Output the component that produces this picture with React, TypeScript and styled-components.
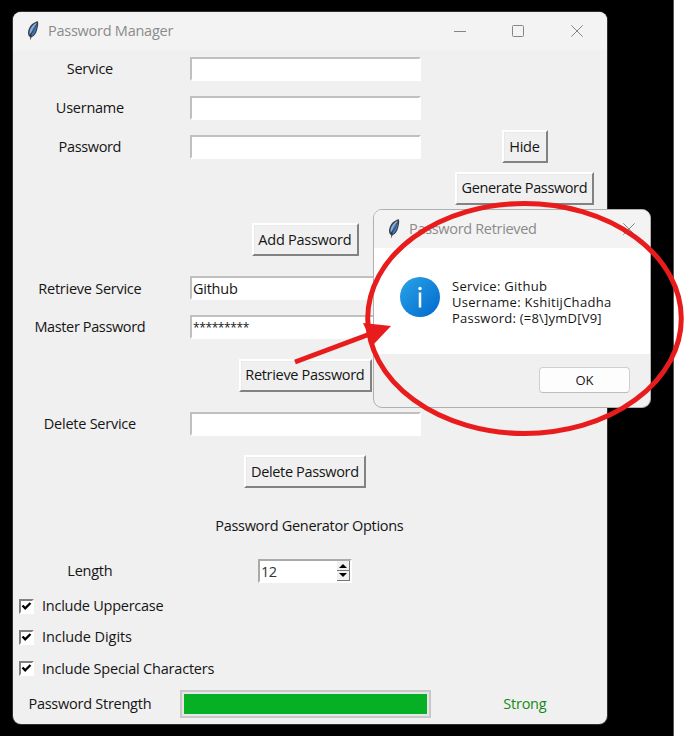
import React from "react";
import styled, { createGlobalStyle } from "styled-components";

const Global = createGlobalStyle`
  * { box-sizing: border-box; }
  body { margin: 0; background: #fff; }
`;

const Desktop = styled.div`
  position: relative;
  width: 684px;
  height: 736px;
  overflow: hidden;
  padding: 12px 0 0 13px;
  background: linear-gradient(90deg, #000 673px, #555 673px, #555 674px, #fff 674px);
  font-family: "Open Sans", "Noto Sans", sans-serif;
  font-size: 14.5px;
  line-height: 20px;
  color: #151515;
`;

const Window = styled.main`
  width: 594px;
  height: 712px;
  border-radius: 8px;
  overflow: hidden;
  background: #f0f0f0;
  box-shadow: 0 0 0 1px #303030;
`;

const TitleBar = styled.header`
  display: flex;
  align-items: center;
  height: 38px;
  padding-left: 11px;
  background: #f3f3f3;
  color: #8b8b8b;
`;

const Title = styled.div`
  flex: 1;
  padding-left: 7px;
`;

const Caption = styled.div<{ $w: number }>`
  display: flex;
  justify-content: center;
  width: ${(p) => p.$w}px;
`;

const Form = styled.div`
  display: grid;
  margin-top: -1px;
  grid-template-columns: 154px 276px 163px;
  grid-template-rows: 39px 39px 39px 44px 59px 38px 39px 58px 39px 57px 51px 39px 31px 31px 32px 39px;
`;

const Cell = styled.div<{ $row: number; $col: number; $left?: boolean; $indent?: number; $drop?: number }>`
  grid-row: ${(p) => p.$row};
  grid-column: ${(p) => (p.$left ? "1 / 3" : p.$col)};
  display: flex;
  align-items: center;
  justify-content: ${(p) => (p.$left ? "flex-start" : "center")};
  padding-left: ${(p) => p.$indent ?? 0}px;
  padding-top: ${(p) => p.$drop ?? 0}px;
`;

const Fitted = styled.span<{ $s?: number }>`
  display: inline-block;
  white-space: pre;
  letter-spacing: ${(p) => p.$s ?? -0.25}px;
  margin-right: ${(p) => -(p.$s ?? -0.25)}px;
`;

const Entry = styled.div<{ $masked?: boolean }>`
  width: 231px;
  height: 24px;
  padding: 0 1px;
  font-size: ${(p) => (p.$masked ? 12 : 14.5)}px;
  line-height: 21px;
  border: 2px solid #fff;
  border-top-color: #c0c0c0;
  border-left-color: #c0c0c0;
  background: #fff;
`;

const Button = styled.button<{ $w: number }>`
  display: flex;
  align-items: center;
  justify-content: center;
  width: ${(p) => p.$w}px;
  height: 33px;
  padding: 0;
  font: inherit;
  color: inherit;
  background: #f0f0f0;
  border: 2px solid;
  border-color: #fff #828282 #828282 #fff;
  box-shadow: inset 1px 1px #e9e9e9;
`;

const Spin = styled.div`
  display: flex;
  width: 94px;
  height: 24px;
  padding-left: 1px;
  line-height: 21px;
  border: 2px solid #fff;
  border-top-color: #aaa;
  border-left-color: #aaa;
  background: #fff;
`;

const SpinValue = styled.span`
  flex: 1;
  color: #333;
  letter-spacing: -0.5px;
`;

const Steps = styled.div`
  display: grid;
  grid-template-rows: 10px 10px;
  width: 13px;
`;

const Step = styled.div`
  display: flex;
  align-items: center;
  justify-content: center;
  background: #f0f0f0;
  border-right: 1px solid #777;
  border-bottom: 1px solid #777;
`;

const Box = styled.span`
  display: flex;
  width: 15px;
  height: 15px;
  margin-right: 8px;
  border: 2px solid #fff;
  border-top-color: #808080;
  border-left-color: #808080;
  background: #fff;
`;

const Track = styled.div`
  width: 251px;
  height: 28px;
  padding: 2px;
  border: 2px solid #c8c8c8;
  background: #e6e6e6;
`;

const Fill = styled.div`
  height: 100%;
  background: #06b025;
`;

const Strong = styled.span`
  color: #148a14;
`;

const Dialog = styled.section`
  position: absolute;
  left: 373px;
  top: 209px;
  width: 278px;
  height: 199px;
  overflow: hidden;
  border: 1px solid #b0b0b0;
  border-radius: 9px;
  background: #f0f0f0;
`;

const Message = styled.div`
  display: flex;
  height: 106px;
  padding: 29px 0 0 26px;
  background: #fff;
`;

const Lines = styled.div`
  padding: 1px 0 0 12px;
  font-size: 13px;
  line-height: 16px;
`;

const Footer = styled.footer`
  display: flex;
  justify-content: flex-end;
  padding: 13px 20px 0 0;
`;

const OkButton = styled.button`
  width: 91px;
  height: 26px;
  padding: 0;
  border: 1px solid #cfcfcf;
  border-bottom-color: #bcbcbc;
  border-radius: 4px;
  background: #fdfdfd;
  color: inherit;
  font: inherit;
  font-size: 13px;
`;

const Annotation = styled.svg`
  position: absolute;
  inset: 0;
  pointer-events: none;
`;

const Feather = () => (
  <svg width="17" height="20" viewBox="0 0 17 20">
    <path d="M14 .3C10 1 6.500 3.800 4.800 8c-1 2.500-1.100 5 0 7l1.400 1.200.1 3.300 1.200-3.200C10.800 15 12.300 12 13.100 9c.8-3 1.500-5.800.9-8.700Z" fill="#3a3c42" />
    <path d="M12.800 1.700C9.500 3 6.400 6.500 5.600 10l-.1 3.600C8.500 11 11 7 12.800 1.700Z" fill="#7fb0e6" />
    <path d="M13 2.800c0 4.500-1.500 9.400-4.400 12L6.700 14.200C9.500 10.500 11.700 7 13 2.800Z" fill="#3f78bd" />
    <path d="M12 4C9.500 7 7.500 11 6.500 16" fill="none" stroke="#1d3c66" strokeWidth=".7" />
  </svg>
);

const Close = () => (
  <svg width="14" height="14" viewBox="0 0 14 14" stroke="#858585" fill="none">
    <path d="m1.300 1.300 11.400 11.400M12.700 1.300 1.300 12.700" />
  </svg>
);

const Check = ({ text, row, s }: { text: string; row: number; s?: number }) => (
  <Cell $row={row} $col={1} $left $indent={6} $drop={1}>
    <Box>
      <svg width="11" height="11" viewBox="0 0 11 11">
        <path d="M1.500 4.500 4.200 7.300 9.500 2" stroke="#000" strokeWidth="2.300" fill="none" />
      </svg>
    </Box>
    <Fitted $s={s}>{text}</Fitted>
  </Cell>
);

const labels: { row: number; text: string; s?: number }[] = [
  { row: 1, text: "Service" },
  { row: 2, text: "Username" },
  { row: 3, text: "Password", s: -0.35 },
  { row: 6, text: "Retrieve Service" },
  { row: 7, text: "Master Password", s: -0.37 },
  { row: 9, text: "Delete Service" },
  { row: 12, text: "Length" },
  { row: 16, text: "Password Strength" },
];

const entries: { row: number; text?: string; s?: number; masked?: boolean }[] = [
  { row: 1 },
  { row: 2 },
  { row: 3 },
  { row: 6, text: "Github" },
  { row: 7, text: "*********", s: -0.4, masked: true },
  { row: 9 },
];

const buttons: { row: number; col: number; text: string; w: number; s?: number }[] = [
  { row: 3, col: 3, text: "Hide", w: 46 },
  { row: 4, col: 3, text: "Generate Password", w: 139, s: -0.38 },
  { row: 5, col: 2, text: "Add Password", w: 107 },
  { row: 8, col: 2, text: "Retrieve Password", w: 133, s: -0.32 },
  { row: 10, col: 2, text: "Delete Password", w: 122, s: -0.35 },
];

export default function App() {
  return (
    <Desktop>
      <Global />
      <Window>
        <TitleBar>
          <Feather />
          <Title><Fitted>Password Manager</Fitted></Title>
          <Caption $w={58}><svg width="13" height="13" stroke="#858585"><path d="M0 6.500h12" /></svg></Caption>
          <Caption $w={58}><svg width="13" height="13" stroke="#858585" fill="none"><rect x=".5" y=".5" width="11" height="11" rx="1" /></svg></Caption>
          <Caption $w={60}><Close /></Caption>
        </TitleBar>
        <Form>
          {labels.map((l) => (
            <Cell key={l.text} $row={l.row} $col={1} $drop={1}><Fitted $s={l.s}>{l.text}</Fitted></Cell>
          ))}
          <Cell $row={11} $col={2} $indent={9} $drop={1}><Fitted $s={-0.3}>Password Generator Options</Fitted></Cell>
          {entries.map((e) => (
            <Cell key={e.row} $row={e.row} $col={2} $indent={1}>
              <Entry $masked={e.masked}>{e.text && <Fitted $s={e.s}>{e.text}</Fitted>}</Entry>
            </Cell>
          ))}
          {buttons.map((b) => (
            <Cell key={b.text} $row={b.row} $col={b.col}>
              <Button $w={b.w}><Fitted $s={b.s}>{b.text}</Fitted></Button>
            </Cell>
          ))}
          <Cell $row={12} $col={2}>
            <Spin>
              <SpinValue>12</SpinValue>
              <Steps>
                <Step><svg width="8" height="5"><path d="M0 5 4 1l4 4Z" /></svg></Step>
                <Step><svg width="8" height="5"><path d="M0 0h8L4 4Z" /></svg></Step>
              </Steps>
            </Spin>
          </Cell>
          <Check row={13} text="Include Uppercase" />
          <Check row={14} text="Include Digits" s={-0.08} />
          <Check row={15} text="Include Special Characters" s={-0.2} />
          <Cell $row={16} $col={2} $indent={1}><Track><Fill /></Track></Cell>
          <Cell $row={16} $col={3} $indent={1} $drop={1}><Strong><Fitted>Strong</Fitted></Strong></Cell>
        </Form>
      </Window>
      <Dialog>
        <TitleBar>
          <Feather />
          <Title><Fitted $s={-0.32}>Password Retrieved</Fitted></Title>
          <Caption $w={42}><Close /></Caption>
        </TitleBar>
        <Message>
          <svg width="40" height="40" viewBox="0 0 40 40">
            <defs>
              <linearGradient id="info" x1="0" y1="0" x2="1" y2="1">
                <stop offset="0" stopColor="#2aa5e8" />
                <stop offset="1" stopColor="#0068cd" />
              </linearGradient>
            </defs>
            <circle cx="20" cy="20" r="20" fill="url(#info)" />
            <circle cx="20" cy="11.500" r="1.700" fill="#fff" />
            <path d="M20 15.500v15" stroke="#fff" strokeWidth="2.500" />
          </svg>
          <Lines>
            <div><Fitted $s={0.27}>Service: Github</Fitted></div>
            <div><Fitted $s={0.29}>Username: KshitijChadha</Fitted></div>
            <div><Fitted $s={0.23}>{"Password: (=8\\]ymD[V9]"}</Fitted></div>
          </Lines>
        </Message>
        <Footer><OkButton>OK</OkButton></Footer>
      </Dialog>
      <Annotation width="684" height="736">
        <ellipse cx="524.5" cy="318.500" rx="156.800" ry="115" fill="none" stroke="#e81c1c" strokeWidth="5" />
        <path d="M295 362 370 334" stroke="#e81c1c" strokeWidth="5" />
        <path d="m363 323 28 3-18 19Z" fill="#e81c1c" />
      </Annotation>
    </Desktop>
  );
}
